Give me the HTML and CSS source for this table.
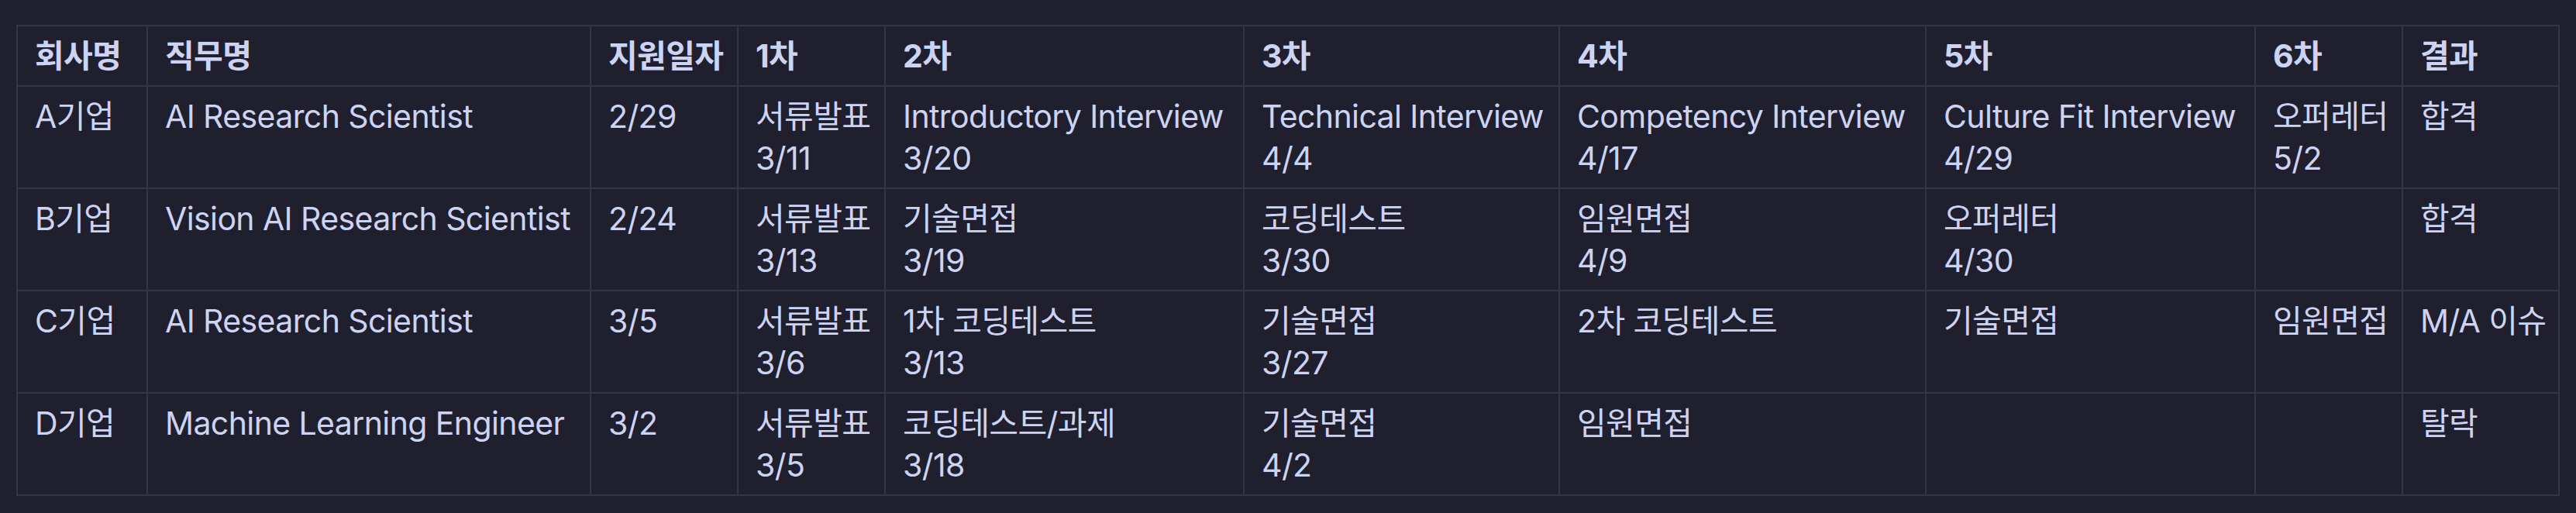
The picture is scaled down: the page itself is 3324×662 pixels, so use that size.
FILE: index.html
```html
<!DOCTYPE html>
<html lang="ko">
<head>
<meta charset="utf-8">
<title>지원 현황</title>
<link rel="stylesheet" href="styles.css">
</head>
<body>
<table class="tbl">
  <colgroup>
    <col class="c1"><col class="c2"><col class="c3"><col class="c4"><col class="c5">
    <col class="c6"><col class="c7"><col class="c8"><col class="c9"><col class="c10">
  </colgroup>
  <thead>
    <tr><th>회사명</th><th>직무명</th><th>지원일자</th><th>1차</th><th>2차</th><th>3차</th><th>4차</th><th>5차</th><th>6차</th><th>결과</th></tr>
  </thead>
  <tbody>
    <tr><td>A기업</td><td>AI Research Scientist</td><td>2/29</td><td>서류발표<br>3/11</td><td>Introductory Interview<br>3/20</td><td>Technical Interview<br>4/4</td><td>Competency Interview<br>4/17</td><td>Culture Fit Interview<br>4/29</td><td>오퍼레터<br>5/2</td><td>합격</td></tr>
    <tr><td>B기업</td><td>Vision AI Research Scientist</td><td>2/24</td><td>서류발표<br>3/13</td><td>기술면접<br>3/19</td><td>코딩테스트<br>3/30</td><td>임원면접<br>4/9</td><td>오퍼레터<br>4/30</td><td></td><td>합격</td></tr>
    <tr><td>C기업</td><td>AI Research Scientist</td><td>3/5</td><td>서류발표<br>3/6</td><td>1차 코딩테스트<br>3/13</td><td>기술면접<br>3/27</td><td>2차 코딩테스트</td><td>기술면접</td><td>임원면접</td><td>M/A 이슈</td></tr>
    <tr><td>D기업</td><td>Machine Learning Engineer</td><td>3/2</td><td>서류발표<br>3/5</td><td>코딩테스트/과제<br>3/18</td><td>기술면접<br>4/2</td><td>임원면접</td><td></td><td></td><td>탈락</td></tr>
  </tbody>
</table>
</body>
</html>
```
FILE: styles.css
```css
html, body {
  margin: 0;
  background: #1f1f2d;
}
body {
  padding: 32px 0 0 21px;
  font-family: Inter, "Noto Sans CJK KR", sans-serif;
  font-size: 41px;
  line-height: 54px;
  color: #cdd4f3;
}
.tbl {
  border-collapse: collapse;
  table-layout: fixed;
  width: 3280px;
}
.c1 { width: 168px; }
.c2 { width: 572px; }
.c3 { width: 190px; }
.c4 { width: 190px; }
.c5 { width: 463px; }
.c6 { width: 407px; }
.c7 { width: 473px; }
.c8 { width: 425px; }
.c9 { width: 190px; }
.c10 { width: 202px; }
.tbl th,
.tbl td {
  border: 2px solid #333446;
  padding: 11px 22px;
  text-align: left;
  vertical-align: top;
  white-space: nowrap;
  letter-spacing: -0.6px;
}
.tbl th {
  font-weight: 700;
}
.tbl td {
  font-weight: 400;
}
```
